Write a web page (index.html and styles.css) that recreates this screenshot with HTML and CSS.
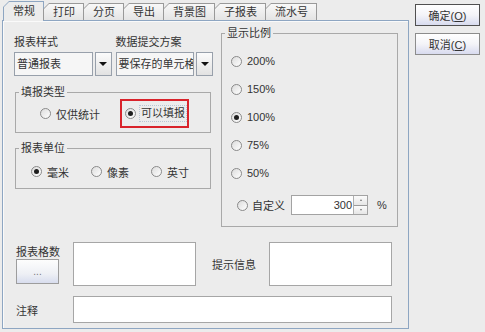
FILE: index.html
```html
<!DOCTYPE html>
<html lang="zh-CN">
<head>
  <meta charset="UTF-8" />
  <title>报表属性</title>
  <link rel="stylesheet" href="styles.css">
</head>
<body>
  <div class="dialog">
    <div class="tabbed">
      <div class="tabs">
        <div class="tab active"><span>常规</span></div>
        <div class="tab"><span>打印</span></div>
        <div class="tab"><span>分页</span></div>
        <div class="tab"><span>导出</span></div>
        <div class="tab"><span>背景图</span></div>
        <div class="tab"><span>子报表</span></div>
        <div class="tab"><span>流水号</span></div>
      </div>

      <div class="panel">
        <div class="top">
          <div class="left">
            <div class="fields">
              <div class="field">
                <div class="label">报表样式</div>
                <div class="combo">
                  <div class="combo-text">普通报表</div>
                  <div class="combo-btn"><span class="arrow"></span></div>
                </div>
              </div>
              <div class="field">
                <div class="label">数据提交方案</div>
                <div class="combo">
                  <div class="combo-text">要保存的单元格</div>
                  <div class="combo-btn"><span class="arrow"></span></div>
                </div>
              </div>
            </div>

            <fieldset class="group type-group">
              <legend>填报类型</legend>
              <div class="radio-row">
                <label class="radio"><span class="dot"></span>仅供统计</label>
                <label class="radio hl"><span class="dot checked"></span><span class="focus">可以填报</span></label>
              </div>
            </fieldset>

            <fieldset class="group unit-group">
              <legend>报表单位</legend>
              <div class="radio-row">
                <label class="radio"><span class="dot checked"></span>毫米</label>
                <label class="radio"><span class="dot"></span>像素</label>
                <label class="radio"><span class="dot"></span>英寸</label>
              </div>
            </fieldset>
          </div>

          <fieldset class="group scale-group">
            <legend>显示比例</legend>
            <div class="scale-list">
              <label class="radio scale"><span class="dot"></span>200%</label>
              <label class="radio scale"><span class="dot"></span>150%</label>
              <label class="radio scale"><span class="dot checked"></span>100%</label>
              <label class="radio scale"><span class="dot"></span>75%</label>
              <label class="radio scale"><span class="dot"></span>50%</label>
              <div class="custom-row">
                <label class="radio"><span class="dot"></span>自定义</label>
                <div class="spinner">
                  <div class="spin-value">300</div>
                  <div class="spin-btns"><span class="up"></span><span class="down"></span></div>
                </div>
                <span class="unit">%</span>
              </div>
            </div>
          </fieldset>
        </div>

        <div class="bottom">
          <div class="stack">
            <div class="label">报表格数</div>
            <button class="dots">...</button>
          </div>
          <div class="box"></div>
          <div class="side-label">提示信息</div>
          <div class="box"></div>
          <div class="note-label">注释</div>
          <div class="box wide"></div>
        </div>
      </div>
    </div>

    <div class="actions">
      <button class="btn default">确定(<u>O</u>)</button>
      <button class="btn">取消(<u>C</u>)</button>
    </div>
  </div>
</body>
</html>
```

FILE: styles.css
```css
* {
  margin: 0;
  padding: 0;
  box-sizing: border-box;
}
body {
  width: 485px;
  height: 332px;
  overflow: hidden;
  background-color: #ececec;
  font-family: "Liberation Sans", "Noto Sans CJK SC", sans-serif;
  font-size: 11px;
  color: #333;
}
.dialog {
  display: flex;
  align-items: flex-start;
  padding-left: 2px;
}
.tabbed {
  width: 407px;
}

/* tab strip */
.tabs {
  display: flex;
  align-items: flex-end;
  height: 21px;
  padding-left: 1px;
  position: relative;
  z-index: 1;
}
.tab {
  height: 17px;
  margin-bottom: 1px;
  padding: 1px 1px 0;
  background: #999;
  clip-path: polygon(6px 0, 100% 0, 100% 100%, 0 100%, 0 6px);
}
.tab + .tab {
  margin-left: -1px;
}
.tab span {
  display: block;
  height: 100%;
  padding: 0 8px 0 9px;
  line-height: 16px;
  background: linear-gradient(#f8f8f8, #e4e4e4);
  clip-path: polygon(5px 0, 100% 0, 100% 100%, 0 100%, 0 5px);
}
.tab.active {
  height: 20px;
  margin-bottom: 0;
  background: #8ea6c2;
}
.tab.active span {
  line-height: 18px;
  background: #ececec;
}

.panel {
  margin-top: -1px;
  padding: 5px 10px 5px 11px;
  border: 1px solid #8ea6c2;
  box-shadow: inset 1px 1px 0 #fafafa;
}
.top {
  display: flex;
  align-items: flex-start;
  gap: 8px;
}
.left {
  width: 199px;
  padding-top: 9px;
}
.fields {
  display: flex;
  gap: 4px;
}
.field {
  flex: 1;
  min-width: 0;
}
.label {
  line-height: 14px;
  margin-bottom: 3px;
  white-space: nowrap;
}
.combo {
  display: flex;
  gap: 2px;
  height: 24px;
}
.combo-text {
  flex: 1;
  min-width: 0;
  padding-left: 2px;
  line-height: 22px;
  white-space: nowrap;
  overflow: hidden;
  background: #f6f6f6;
  border: 1px solid #98a0ab;
}
.combo-btn {
  width: 17px;
  display: flex;
  align-items: center;
  justify-content: center;
  background: linear-gradient(#fbfbfb, #e2e2e2);
  border: 1px solid #98a0ab;
}
.arrow {
  border-left: 4px solid transparent;
  border-right: 4px solid transparent;
  border-top: 4px solid #111;
}

/* group boxes */
.group {
  border: 1px solid #a9a9a9;
}
.group legend {
  margin-left: 3px;
  padding: 0 2px;
  line-height: 14px;
}
.radio {
  display: flex;
  align-items: center;
  gap: 5px;
  white-space: nowrap;
}
.dot {
  width: 11px;
  height: 11px;
  flex: none;
  border-radius: 50%;
  border: 1px solid #8a8a8a;
  background: linear-gradient(135deg, #dcdcdc, #ffffff);
  display: flex;
  align-items: center;
  justify-content: center;
}
.dot.checked::after {
  content: "";
  width: 5px;
  height: 5px;
  border-radius: 50%;
  background: #1e1e1e;
}
.type-group {
  width: 196px;
  margin: 9px 0 0 1px;
}
.type-group .radio-row {
  display: flex;
  align-items: center;
  height: 29px;
  margin-bottom: 4px;
  padding-left: 24px;
}
.hl {
  height: 29px;
  margin-left: 20px;
  padding: 0 0 0 3px;
  gap: 3px;
  border: 2px solid #d9232b;
}
.focus {
  padding: 0 1px;
  line-height: 15px;
  border: 1px dotted #b9c6d4;
}
.unit-group {
  width: 196px;
  margin: 8px 0 0 1px;
}
.unit-group .radio-row {
  display: flex;
  align-items: center;
  gap: 22px;
  height: 33px;
  padding-left: 15px;
}

.scale-group {
  width: 177px;
}
.scale-list {
  padding: 7px 0 3px;
}
.scale {
  height: 28px;
  padding-left: 9px;
}
.custom-row {
  display: flex;
  align-items: center;
  height: 36px;
  padding-left: 15px;
}
.custom-row .radio {
  gap: 4px;
}
.spinner {
  display: flex;
  width: 77px;
  height: 20px;
  margin-left: 6px;
  background: #fff;
  border: 1px solid #a3a3a3;
}
.spin-value {
  flex: 1;
  padding-right: 1px;
  text-align: right;
  line-height: 18px;
}
.spin-btns {
  width: 14px;
  display: flex;
  flex-direction: column;
  border-left: 1px solid #b0b0b0;
}
.spin-btns span {
  flex: 1;
  display: flex;
  align-items: center;
  justify-content: center;
  background: linear-gradient(#fbfbfb, #e6e6e6);
}
.spin-btns .up {
  border-bottom: 1px solid #9a9a9a;
}
.spin-btns .up::after {
  content: "";
  border-left: 1.5px solid transparent;
  border-right: 1.5px solid transparent;
  border-bottom: 2px solid #777;
}
.spin-btns .down::after {
  content: "";
  border-left: 1.5px solid transparent;
  border-right: 1.5px solid transparent;
  border-top: 2px solid #777;
}
.unit {
  margin-left: 9px;
}

/* lower fields */
.bottom {
  display: grid;
  grid-template-columns: 57px 123px 73px 123px;
  grid-template-rows: 44px 27px;
  row-gap: 10px;
  margin: 15px 0 0 2px;
}
.stack {
  display: flex;
  flex-direction: column;
  justify-content: center;
}
.stack .label {
  margin-bottom: 0;
}
.dots {
  width: 43px;
  height: 25px;
  font: inherit;
  font-size: 10px;
  color: #777;
  background: linear-gradient(#fdfdfd, #eef0f5 60%, #d8ddee);
  border: 1px solid #9d9d9d;
}
.side-label {
  align-self: center;
  padding-left: 16px;
}
.note-label {
  align-self: center;
}
.box {
  background: #fff;
  border: 1px solid #a6a6a6;
}
.box.wide {
  grid-column: 2 / 5;
}

/* dialog buttons */
.actions {
  display: flex;
  flex-direction: column;
  gap: 7px;
  margin-left: 6px;
  padding-top: 4px;
}
.btn {
  width: 65px;
  height: 22px;
  font: inherit;
  color: #333;
  background: linear-gradient(#ffffff, #f4f4f8 50%, #d8dbef);
  border: 1px solid #8c8c8c;
}
.btn.default {
  border-color: #505050;
}
```
